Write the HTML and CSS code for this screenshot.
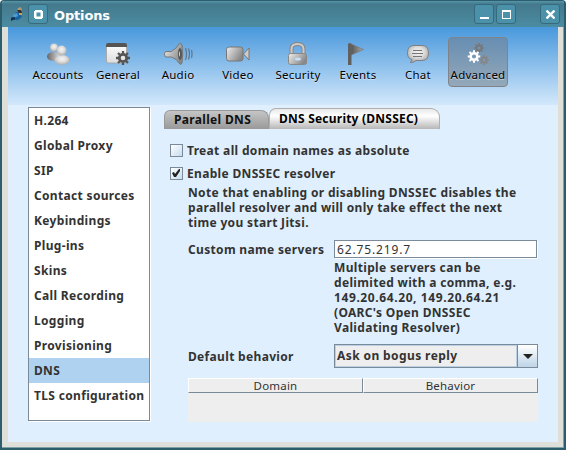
FILE: index.html
```html
<!DOCTYPE html>
<html lang="en">
<head>
<meta charset="utf-8">
<title>Options</title>
<link rel="stylesheet" href="styles.css">
</head>
<body>
<div class="window">
  <header class="titlebar">
    <svg class="app-icon" width="14" height="16" viewBox="0 0 14 16"><path d="M8 2l3-1 1 3-2 3-3-2z" fill="#a99a70"/><path d="M7 4l4 0 1 3-3 1z" fill="#3d2c24"/><path d="M6 6l4 1 2 4-4 3-5 0-2-3 3 0z" fill="#1763a0"/><path d="M3 9l4-2 1 3-4 2z" fill="#4d9add"/><path d="M1 12l4-1 0 2-4 2z" fill="#172f49"/><path d="M9 7h3v2H9z" fill="#d4a047"/></svg>
    <button class="wbtn menu"><svg width="9" height="9" viewBox="0 0 9 9"><path d="M1 0h7v1h1v7H8v1H1V8H0V1h1zM2.500 2.500v4h4v-4z" fill="#fff" fill-rule="evenodd"/></svg></button>
    <h1>Options</h1>
    <button class="wbtn"><svg width="9" height="9"><path d="M0 7h9v2H0z" fill="#fff"/></svg></button>
    <button class="wbtn"><svg width="9" height="9"><path d="M0 0h9v9H0zM1 2v6h7V2z" fill="#fff" fill-rule="evenodd"/></svg></button>
    <button class="wbtn close"><svg width="9" height="9"><path d="M.5 .5l8 8M8.500 .5L.5 8.500" stroke="#fff" stroke-width="2.300"/></svg></button>
  </header>
  <main class="content">
    <svg width="0" height="0" class="defs"><defs>
      <linearGradient id="metal" x1="0" x2="1" y1="0" y2=".5"><stop stop-color="#eee"/><stop offset="1" stop-color="#888"/></linearGradient>
      <linearGradient id="dark" x1="0" x2="1"><stop stop-color="#555"/><stop offset="1" stop-color="#aaa"/></linearGradient>
      <radialGradient id="ball" cx=".5" cy=".4" r=".6"><stop stop-color="#f4f4f4"/><stop offset=".5" stop-color="#ddd"/><stop offset="1" stop-color="#aaa"/></radialGradient>
      <linearGradient id="shade" x1="0" x2="1"><stop stop-color="#666"/><stop offset="1" stop-color="#ddd"/></linearGradient>
      <linearGradient id="page" x1="0" x2="0" y1="0" y2="1"><stop stop-color="#fff"/><stop offset="1" stop-color="#ddd"/></linearGradient>
      <g id="gear"><circle r="3.700" fill="none" stroke-width="2.800"/><path d="M0-7v2.500M0 4.500v2.500M-7 0h2.500M4.500 0h2.500M-5-5l1.800 1.800M3.200 3.200l1.800 1.800M5-5l-1.800 1.800M-3.200 3.200l-1.800 1.800" stroke-width="2.300"/></g>
    </defs></svg>
    <nav class="toolbar">
      <div class="tool"><svg width="24" height="24" viewBox="0 0 24 24"><ellipse cx="7.500" cy="14.500" rx="6.500" ry="4.500" fill="url(#shade)"/><circle cx="8" cy="5.500" r="4" fill="url(#ball)"/><ellipse cx="16" cy="18" rx="7.500" ry="5" fill="url(#ball)"/><circle cx="15.500" cy="8.500" r="5" fill="url(#ball)"/></svg><span>Accounts</span></div>
      <div class="tool"><svg width="24" height="24" viewBox="0 0 24 24"><rect x=".5" y="1.500" width="20" height="19.500" rx="2" fill="url(#page)" stroke="#aaa"/><path d="M0 5V3q0-2 2-2h17q2 0 2 2v2z" fill="#555"/><use href="#gear" x="17" y="16" stroke="#555"/></svg><span>General</span></div>
      <div class="tool"><svg width="30" height="24" viewBox="0 0 30 24"><path d="M2.500 9.500h6Q14 6 16 2q2-2 3 1 1.500 9 0 18-1 3-3 0-2-4-7.500-6h-6Q0 12 2.500 9.500z" fill="url(#metal)" stroke="#777"/><ellipse cx="17" cy="12" rx="2" ry="6" fill="#555"/><path d="M16 9q2 3 0 6z" fill="#ddd"/><path d="M22.500 6q2 6 0 12M25.500 6.500q2 5 0 11M28.500 8q1 4 0 8" fill="none" stroke="#60778c" stroke-width="1.200"/></svg><span>Audio</span></div>
      <div class="tool"><svg width="24" height="24" viewBox="0 0 24 24"><rect x=".5" y="5" width="16.500" height="14" rx="2.500" fill="url(#metal)" stroke="#777"/><path d="M17.500 12l5.500-6v12z" fill="#ccc" stroke="#777"/></svg><span>Video</span></div>
      <div class="tool"><svg width="24" height="24" viewBox="0 0 24 24"><path d="M5.500 12V7q0-5 6-5t6 5v5" fill="none" stroke="#858585" stroke-width="4"/><path d="M5.500 11V7q0-5 6-5t6 5v4" fill="none" stroke="#ccc" stroke-width="2"/><rect x="2.500" y="11.500" width="18" height="11" rx="2" fill="url(#metal)" stroke="#888"/><ellipse cx="12" cy="17" rx="3" ry="1.500" fill="#c7dff6"/></svg><span>Security</span></div>
      <div class="tool"><svg width="24" height="24" viewBox="0 0 24 24"><path d="M5 2l12.500 5.500L5 13z" fill="url(#dark)" stroke="#777" stroke-width=".7"/><path d="M2 2q1.500-2 3.500 0v21H2z" fill="#606060"/></svg><span>Events</span></div>
      <div class="tool"><svg width="24" height="24" viewBox="0 0 24 24"><path d="M8 3.500h8q6.500 0 6.500 7.500T16 18.500h-6q-2 2-6 2 2-1 2-3-4.500-1-4.500-6.500 0-7.500 6.500-7.500z" fill="url(#ball)" stroke="#808080"/><path d="M7 8.500h9M6 11.500h11M7 14.500h9" stroke="#777" stroke-width="1.200"/></svg><span>Chat</span></div>
      <div class="tool active"><svg width="24" height="24" viewBox="0 0 24 24"><use href="#gear" transform="translate(13 6) scale(.7)" stroke="#777"/><use href="#gear" transform="translate(18 18) scale(.7)" stroke="#858585"/><use href="#gear" transform="translate(8 14.500) scale(.9)" stroke="#fff"/></svg><span>Advanced</span></div>
    </nav>
    <div class="body">
      <ul class="list">
        <li>H.264</li><li>Global Proxy</li><li>SIP</li><li>Contact sources</li><li>Keybindings</li><li>Plug-ins</li><li>Skins</li><li>Call Recording</li><li>Logging</li><li>Provisioning</li><li class="selected">DNS</li><li class="tls">TLS configuration</li>
      </ul>
      <section class="panel">
        <div class="tabs"><div class="tab">Parallel DNS</div><div class="tab current">DNS Security (DNSSEC)</div></div>
        <div class="check first"><i class="box"></i><span>Treat all domain names as absolute</span></div>
        <div class="check second"><i class="box"><svg width="9" height="9" viewBox="0 0 9 9"><path d="M0 4l2-1 1 2 4-5h1v2L4 8H2z" fill="#222"/></svg></i><span>Enable DNSSEC resolver</span></div>
        <p class="note">Note that enabling or disabling DNSSEC disables the<br>parallel resolver and will only take effect the next<br>time you start Jitsi.</p>
        <div class="row servers"><label>Custom name servers</label><div class="input">62.75.219.7</div></div>
        <p class="hint">Multiple servers can be<br>delimited with a comma, e.g.<br><span class="ips">149.20.64.20, 149.20.64.21</span><br>(OARC's Open DNSSEC<br>Validating Resolver)</p>
        <div class="row behavior"><label>Default behavior</label><div class="select"><span>Ask on bogus reply</span><i class="arrow"><svg width="10" height="5"><path d="M0 0h10L5 5z" fill="#222"/></svg></i></div></div>
        <div class="table"><div class="th">Domain</div><div class="th">Behavior</div></div>
      </section>
    </div>
  </main>
</div>
</body>
</html>
```
FILE: styles.css
```css
* { box-sizing: border-box; }
body { margin: 0; background: #fff; }
.window {
  width: 566px; height: 450px; padding: 0 6px 6px; overflow: hidden;
  background: #dfdfd9; border: solid #2b5d6d; border-width: 1px 2px 2px;
  border-radius: 4px 4px 0 0;
  box-shadow: inset -1px -1px #7da1a5;
  font: bold 12px/15px "Noto Sans", sans-serif; letter-spacing: .33px;
  color: #333; white-space: nowrap;
}
.titlebar {
  display: flex; align-items: center; height: 26px; margin: 0 -6px; padding: 0 4px 0 8px;
  background: linear-gradient(#5796aa 0, #44798d 3px, #4b8ca2 100%);
}
.app-icon { margin-right: 4px; }
.titlebar h1 { flex: 1; margin: 3px 0 0 6px; font: bold 13px/16px "DejaVu Sans", sans-serif; letter-spacing: -.15px; color: #fff; }
.wbtn {
  display: flex; align-items: center; justify-content: center; width: 20px; height: 20px;
  margin: 0 0 0 2px; padding: 0; background: #4b91a9; border: 1px solid #356b7c; border-radius: 3px;
}
.wbtn svg { flex: none; }
.wbtn.menu { margin: 0; }
.wbtn.close { margin-left: 24px; }
.content { height: 415px; background: #dfeffd; }
.defs { position: absolute; }
.toolbar { display: flex; height: 78px; padding: 10px 20px 0; background: linear-gradient(#4898dc, #d3e8fb); font-weight: 400; font-size: 11.5px; letter-spacing: .25px; color: #000; }
.tool { display: flex; flex-direction: column; align-items: center; width: 60px; height: 50px; padding-top: 4px; border: 1px solid transparent; }
.tool span { line-height: 14px; margin-top: 2px; text-shadow: 0 1px 1px #ffffff90; }
.active { background: linear-gradient(#678eb2, #94a8b9); border: 1px solid #808488; border-radius: 4px; }
.body { display: flex; padding: 2px 20px 0; }
.list { width: 122px; height: 314px; margin: 0; padding: 0; list-style: none; background: #fff; border: 1px solid #7a8a99; box-shadow: 1px 1px #fff; }
.list li { height: 25px; padding-left: 5px; line-height: 25px; }
.list .selected { background: #aed2ef; }
.panel { width: 374px; margin-left: 14px; }
.tabs { display: flex; align-items: flex-end; height: 22px; color: #111; }
.tab { width: 105px; height: 19px; padding-left: 9px; line-height: 17px; background: linear-gradient(#c5c5c5, #999); border: 1px solid #999; border-bottom: 0; border-radius: 6px 8px 0 0; }
.tab.current { width: 171px; height: 21px; line-height: 20px; letter-spacing: .22px; background: linear-gradient(#e8e8e8, #fff 35%, #b7b7b7); border: 1px solid #b0b0b0; border-width: 1px 1px 0; border-radius: 7px 9px 0 0; color: #000; }
.check { display: flex; align-items: center; height: 15px; padding-left: 6px; }
.first { margin-top: 14px; }
.second { margin-top: 8px; }
.check span { margin-left: 4px; }
.box { display: flex; align-items: center; justify-content: center; width: 13px; height: 13px; background: linear-gradient(135deg, #fff, #c6dcef); border: 1px solid #7a8a99; }
.note { margin: 4px 0 0 24px; }
.row { display: flex; align-items: center; margin-left: 24px; }
.row label { width: 146px; }
.servers { margin-top: 10px; }
.input { width: 203px; height: 18px; padding-left: 2px; background: #fff; border: 1px solid #7a8a99; box-shadow: 1px 1px #fff; font-weight: 400; letter-spacing: .85px; line-height: 17px; }
.hint { margin: 2px 0 0 170px; }
.ips { letter-spacing: .6px; }
.behavior { margin-top: 9px; }
.select { display: flex; width: 204px; height: 24px; border: 1px solid #7a8a99; background: #eee; }
.select span { flex: 1; padding-left: 1px; border: 1px solid #b8cfe5; line-height: 20px; letter-spacing: .4px; }
.arrow { display: flex; align-items: center; justify-content: center; width: 20px; border-left: 1px solid #7a8a99; background: linear-gradient(#fff, #bed4e7); }
.table { display: flex; align-items: flex-start; width: 350px; height: 44px; margin: 10px 0 0 24px; background: #eee; font-weight: 400; font-size: 11.5px; letter-spacing: .2px; }
.th { width: 175px; height: 15px; border: solid; border-width: 1px; border-color: #fff #7a8a99 #7a8a99 #fff; line-height: 14px; text-align: center; }
```
